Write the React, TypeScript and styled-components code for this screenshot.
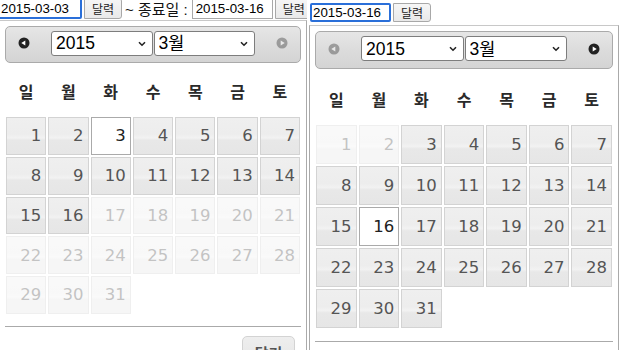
import React from "react";
import styled, { createGlobalStyle } from "styled-components";

type DayState = "default" | "active" | "disabled";

interface CalendarProps {
  selected: number;
  isDisabled: (day: number) => boolean;
  prevEnabled: boolean;
  nextEnabled: boolean;
  width: number;
  offset: number;
  headerHeight: number;
  weekHeight: number;
  weekPad: number;
  rowHeight: number;
  paneGap: number;
}

const WEEKDAYS = ["일", "월", "화", "수", "목", "금", "토"];
const DAYS = Array.from({ length: 31 }, (_, i) => i + 1);

const GlobalStyle = createGlobalStyle`
  html, body {
    margin: 0;
    padding: 0;
    background: #ffffff;
  }
  body {
    width: 620px;
    height: 350px;
    overflow: hidden;
  }
`;

const Page = styled.div`
  display: flex;
  width: 620px;
  height: 350px;
  overflow: hidden;
`;

const Shot = styled.div<{ $width: number }>`
  width: ${({ $width }) => $width}px;
  flex: none;
  display: flex;
  flex-direction: column;
  overflow: hidden;
`;

const TopBar = styled.div<{ $top: number; $height: number }>`
  display: flex;
  align-items: center;
  gap: 2px;
  margin-top: ${({ $top }) => $top}px;
  height: ${({ $height }) => $height}px;
  white-space: nowrap;
`;

const DateInput = styled.input<{ $focused?: boolean; $left?: number }>`
  box-sizing: border-box;
  flex: none;
  width: 81px;
  height: 100%;
  margin: 0 0 0 ${({ $left }) => $left ?? 0}px;
  padding: 0 0 0 ${({ $focused }) => ($focused ? 1 : 3)}px;
  border: ${({ $focused }) => ($focused ? "2px solid #2a6fd9" : "1px solid #a9a9a9")};
  border-radius: ${({ $focused }) => ($focused ? 2 : 0)}px;
  font-family: "Liberation Sans", Arial, sans-serif;
  font-size: 13.3px;
  color: #000;
  background: #fff;
  outline: none;
`;

const PickButton = styled.button`
  box-sizing: border-box;
  flex: none;
  width: 38px;
  height: 100%;
  padding: 0;
  border: 1px solid #a8a8a8;
  border-radius: 0 3px 3px 0;
  background: linear-gradient(#f6f6f6, #e9e9e9);
  font-family: "Noto Sans CJK KR", sans-serif;
  font-size: 12px;
  color: #222;
`;

const RangeLabel = styled.span`
  flex: none;
  margin: 0 2px 0 1px;
  font-family: "Liberation Sans", "Noto Sans CJK KR", sans-serif;
  font-size: 15px;
  color: #111;
`;

const Popup = styled.div<{ $width: number; $offset: number; $top: number }>`
  box-sizing: border-box;
  flex: none;
  width: ${({ $width }) => $width}px;
  margin: ${({ $top }) => $top}px 0 0 ${({ $offset }) => $offset}px;
  padding: 5px 5px 0;
  border: 1px solid #aaaaaa;
  border-top-color: #c8c8c8;
  background: #ffffff;
`;

const Header = styled.div<{ $height: number }>`
  box-sizing: border-box;
  display: flex;
  align-items: center;
  height: ${({ $height }) => $height}px;
  border: 1px solid #aaaaaa;
  border-radius: 5px;
  background: linear-gradient(#e6e6e6 0%, #dcdcdc 50%, #d4d4d4 100%);
`;

const NavButton = styled.span<{ $enabled: boolean }>`
  display: flex;
  align-items: center;
  justify-content: center;
  width: 32px;
  margin: 0 2px 3px;
  flex: none;
  opacity: ${({ $enabled }) => ($enabled ? 1 : 0.35)};
`;

const Title = styled.div`
  flex: 1;
  display: flex;
  gap: 1px;
  margin: 0 9px 3px;
`;

const SelectWrap = styled.div`
  position: relative;
  flex: 1;
  height: 25px;
`;

const Select = styled.select`
  box-sizing: border-box;
  width: 100%;
  height: 100%;
  padding: 0 0 0 4px;
  border: 1px solid #7d7d7d;
  border-radius: 3px;
  background: #ffffff;
  appearance: none;
  font-family: "Liberation Sans", "Noto Sans CJK KR", sans-serif;
  font-size: 17.5px;
  color: #000;
`;

const Chevron = styled.svg`
  position: absolute;
  right: 7px;
  top: 10px;
  pointer-events: none;
`;

const WeekRow = styled.div<{ $height: number; $pad: number }>`
  box-sizing: border-box;
  display: grid;
  grid-template-columns: repeat(7, 1fr);
  gap: 2px;
  align-items: center;
  height: ${({ $height }) => $height}px;
  padding-top: ${({ $pad }) => $pad}px;
  margin: 0 1px;
`;

const WeekDay = styled.span`
  text-align: center;
  font-family: "Noto Sans CJK KR", sans-serif;
  font-weight: 700;
  font-size: 16px;
  color: #2a2a2a;
`;

const DayGrid = styled.div<{ $rowHeight: number }>`
  display: grid;
  grid-template-columns: repeat(7, 1fr);
  grid-auto-rows: ${({ $rowHeight }) => $rowHeight}px;
  gap: 2px;
  margin: 0 1px;
`;

const DayCell = styled.a<{ $state: DayState }>`
  box-sizing: border-box;
  display: flex;
  align-items: center;
  justify-content: flex-end;
  padding-right: 4px;
  border: 1px solid ${({ $state }) => ($state === "active" ? "#aaaaaa" : "#d3d3d3")};
  background: ${({ $state }) =>
    $state === "active"
      ? "#ffffff"
      : "linear-gradient(#efefef 0%, #ededed 45%, #f2f2f2 55%, #e8e8e8 62%, #e6e6e6 100%)"};
  opacity: ${({ $state }) => ($state === "disabled" ? 0.35 : 1)};
  font-family: "DejaVu Sans", Verdana, sans-serif;
  font-size: 16.5px;
  color: ${({ $state }) => ($state === "active" ? "#212121" : "#555555")};
  text-decoration: none;
`;

const ButtonPane = styled.div<{ $gap: number }>`
  display: flex;
  justify-content: flex-end;
  margin-top: ${({ $gap }) => $gap}px;
  padding: 9px 6px 0 0;
  border-top: 1px solid #aaaaaa;
`;

const CloseButton = styled.button`
  box-sizing: border-box;
  width: 53px;
  height: 30px;
  padding: 4px 0 0;
  border: 1px solid #d3d3d3;
  border-radius: 5px;
  background: linear-gradient(#eeeeee, #e6e6e6);
  font-family: "Noto Sans CJK KR", sans-serif;
  font-weight: 700;
  font-size: 15px;
  color: #555;
`;

const NavIcon = ({ dir }: { dir: "w" | "e" }) => (
  <svg width="12" height="12" viewBox="0 0 12 12">
    <circle cx="6" cy="6" r="5.5" fill="#222222" />
    {dir === "w" ? (
      <polygon points="3.3,6 7.3,3.4 7.3,8.6" fill="#ffffff" />
    ) : (
      <polygon points="8.7,6 4.7,3.4 4.7,8.6" fill="#ffffff" />
    )}
  </svg>
);

const DropArrow = () => (
  <Chevron width="8" height="6" viewBox="0 0 8 6">
    <path d="M1 1.2 L4 4.2 L7 1.2" fill="none" stroke="#222" strokeWidth="1.6" />
  </Chevron>
);

const Calendar = (props: CalendarProps) => {
  const { selected, isDisabled, prevEnabled, nextEnabled } = props;

  const stateOf = (day: number): DayState => {
    if (day === selected) return "active";
    if (isDisabled(day)) return "disabled";
    return "default";
  };

  return (
    <Popup $width={props.width} $offset={props.offset} $top={props.offset < 0 ? 1 : 3}>
      <Header $height={props.headerHeight}>
        <NavButton $enabled={prevEnabled}>
          <NavIcon dir="w" />
        </NavButton>
        <Title>
          <SelectWrap>
            <Select defaultValue="2015">
              <option value="2015">2015</option>
            </Select>
            <DropArrow />
          </SelectWrap>
          <SelectWrap>
            <Select defaultValue="3">
              <option value="3">3월</option>
            </Select>
            <DropArrow />
          </SelectWrap>
        </Title>
        <NavButton $enabled={nextEnabled}>
          <NavIcon dir="e" />
        </NavButton>
      </Header>
      <WeekRow $height={props.weekHeight} $pad={props.weekPad}>
        {WEEKDAYS.map((w) => (
          <WeekDay key={w}>{w}</WeekDay>
        ))}
      </WeekRow>
      <DayGrid $rowHeight={props.rowHeight}>
        {DAYS.map((d) => (
          <DayCell key={d} $state={stateOf(d)}>
            {d}
          </DayCell>
        ))}
      </DayGrid>
      <ButtonPane $gap={props.paneGap}>
        <CloseButton>닫기</CloseButton>
      </ButtonPane>
    </Popup>
  );
};

const App = () => {
  return (
    <>
      <GlobalStyle />
      <Page>
        <Shot $width={307}>
          <TopBar $top={-2} $height={22}>
            <DateInput $focused $left={-2} defaultValue="2015-03-03" style={{ width: 84 }} />
            <PickButton>달력</PickButton>
            <RangeLabel>~ 종료일 :</RangeLabel>
            <DateInput defaultValue="2015-03-16" />
            <PickButton>달력</PickButton>
          </TopBar>
          <Calendar
            selected={3}
            isDisabled={(d) => d > 16}
            prevEnabled
            nextEnabled={false}
            width={308}
            offset={-1}
            headerHeight={37}
            weekHeight={54}
            weekPad={2}
            rowHeight={37.75}
            paneGap={12}
          />
        </Shot>
        <Shot $width={313}>
          <TopBar $top={3} $height={20}>
            <DateInput $focused $left={3} defaultValue="2015-03-16" />
            <PickButton>달력</PickButton>
          </TopBar>
          <Calendar
            selected={16}
            isDisabled={(d) => d < 3}
            prevEnabled={false}
            nextEnabled
            width={310}
            offset={2}
            headerHeight={38}
            weekHeight={55.5}
            weekPad={5}
            rowHeight={39}
            paneGap={13.5}
          />
        </Shot>
      </Page>
    </>
  );
};

export default App;
